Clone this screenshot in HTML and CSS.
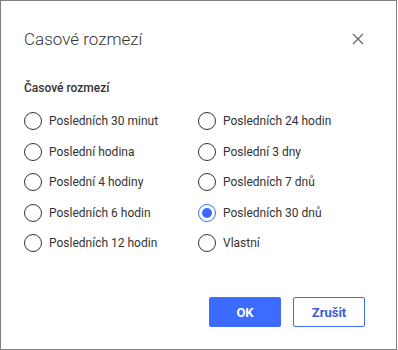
FILE: index.html
```html
<!DOCTYPE html>
<html>
<head>
<meta charset="utf-8">
<link rel="stylesheet" href="styles.css">
</head>
<body>
<div class="dialog">
  <div class="header">
    <h1 class="title">Casové rozmezí</h1>
    <button class="close" aria-label="Zavřít">
      <svg width="12" height="12" viewBox="0 0 12 12"><path d="M1 1L11 11M11 1L1 11" stroke="#666" stroke-width="1.2" fill="none"/></svg>
    </button>
  </div>
  <div class="body">
    <div class="legend">Časové rozmezí</div>
    <div class="options">
      <label class="opt"><span class="radio"></span>Posledních 30 minut</label>
      <label class="opt"><span class="radio"></span>Posledních 24 hodin</label>
      <label class="opt"><span class="radio"></span>Poslední hodina</label>
      <label class="opt"><span class="radio"></span>Poslední 3 dny</label>
      <label class="opt"><span class="radio"></span>Poslední 4 hodiny</label>
      <label class="opt"><span class="radio"></span>Posledních 7 dnů</label>
      <label class="opt"><span class="radio"></span>Posledních 6 hodin</label>
      <label class="opt"><span class="radio checked"></span>Posledních 30 dnů</label>
      <label class="opt"><span class="radio"></span>Posledních 12 hodin</label>
      <label class="opt"><span class="radio"></span>Vlastní</label>
    </div>
  </div>
  <div class="footer">
    <button class="btn primary">OK</button>
    <button class="btn secondary">Zrušit</button>
  </div>
</div>
</body>
</html>
```
FILE: styles.css
```css
html, body {
  margin: 0;
  padding: 0;
  background: #ffffff;
}
body {
  font-family: Roboto, "Noto Sans", sans-serif;
  color: #333333;
}
.dialog {
  box-sizing: border-box;
  width: 397px;
  height: 350px;
  border: 1px solid #808080;
  background: #fff;
  display: flex;
  flex-direction: column;
}
.header {
  display: flex;
  align-items: center;
  justify-content: space-between;
  padding: 26px 32px 0 23px;
  height: 24px;
}
.title {
  margin: 0;
  font-size: 17px;
  font-weight: 300;
  color: #333;
}
.close {
  border: 0;
  background: none;
  padding: 0;
  width: 12px;
  height: 12px;
  display: flex;
}
.body {
  padding: 30px 0 0 23px;
}
.legend {
  font-size: 12px;
  font-weight: 500;
  color: #333;
  line-height: 14px;
  margin-bottom: 11px;
}
.options {
  display: grid;
  grid-template-columns: 174px 174px;
  grid-auto-rows: 30.5px;
}
.opt {
  display: flex;
  align-items: center;
  font-size: 12px;
  color: #333;
}
.radio {
  box-sizing: border-box;
  width: 18px;
  height: 18px;
  border: 1px solid #333;
  border-radius: 50%;
  margin-right: 7px;
  flex: none;
  position: relative;
}
.radio.checked {
  border-color: #3d6bff;
}
.radio.checked::after {
  content: "";
  position: absolute;
  left: 3px;
  top: 3px;
  width: 10px;
  height: 10px;
  border-radius: 50%;
  background: #3d6bff;
}
.footer {
  margin-top: auto;
  display: flex;
  justify-content: flex-end;
  gap: 12px;
  padding: 0 31px 22px 0;
}
.btn {
  box-sizing: border-box;
  width: 72px;
  height: 30px;
  font-family: Roboto, "Noto Sans", sans-serif;
  font-size: 13px;
  font-weight: 700;
  border-radius: 2px;
  cursor: pointer;
}
.primary {
  background: #3d6bff;
  color: #fff;
  border: 1px solid #3d6bff;
}
.secondary {
  background: #fff;
  color: #3d5bd8;
  border: 1px solid #3d6bff;
}
```
